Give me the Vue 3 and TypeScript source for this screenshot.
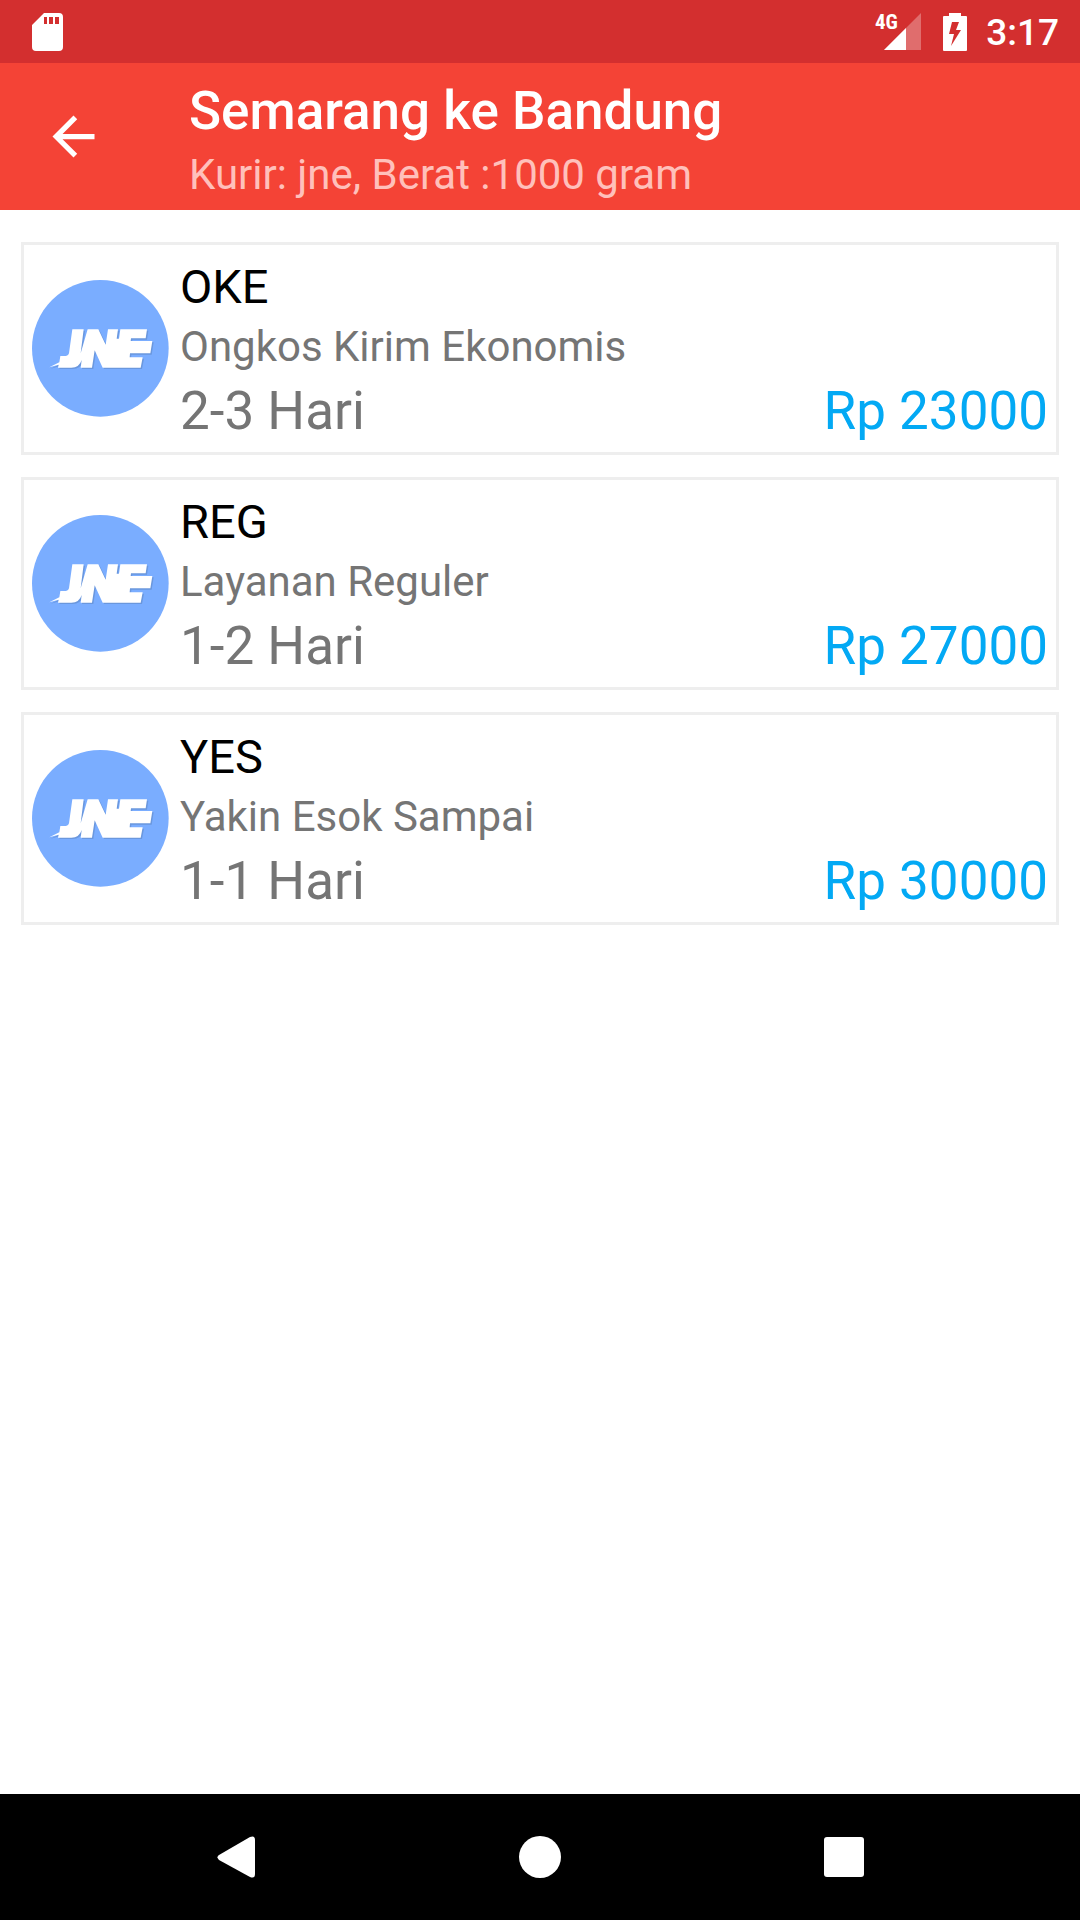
<script setup lang="ts">
interface Service {
  code: string
  description: string
  estimate: string
  price: string
}

const services: Service[] = [
  { code: 'OKE', description: 'Ongkos Kirim Ekonomis', estimate: '2-3 Hari', price: 'Rp 23000' },
  { code: 'REG', description: 'Layanan Reguler', estimate: '1-2 Hari', price: 'Rp 27000' },
  { code: 'YES', description: 'Yakin Esok Sampai', estimate: '1-1 Hari', price: 'Rp 30000' },
]

const logoShape =
  'M121 148H155L146 220L167 148H199L221 194L228 148H258L254 176H261L265 148H345L341 175H297L296 183H361' +
  'L355 220H294L293 232H332L326 263H212L188 211L180 263H146L149 240Q142 263 118 263H78L80 254L52 262' +
  'L82 247L85 228H102Q109 228 111 220Z'
</script>

<template>
  <div class="screen">
    <div class="status-bar">
      <svg class="sd-card" width="31" height="38" viewBox="0 0 31 38" aria-hidden="true">
        <path
          fill="#fff"
          fill-rule="evenodd"
          d="M12 0H27Q31 0 31 4V34Q31 38 27 38H4Q0 38 0 34V12ZM12 4V11H15V4ZM17 4V11H21V4ZM23 4V11H27V4Z"
        />
      </svg>
      <div class="indicators">
        <svg class="signal" width="50" height="42" viewBox="-4 -2 50 42" aria-hidden="true">
          <path fill="#fff" fill-opacity=".3" d="M46 0V37H9Z" />
          <path fill="#fff" d="M31 15V37H9Z" />
          <text class="network" x="0" y="16">4G</text>
        </svg>
        <svg class="battery" width="24" height="38" viewBox="0 0 24 38" aria-hidden="true">
          <path
            fill="#fff"
            fill-rule="evenodd"
            d="M6 0H18V3H23Q24 3 24 4V37Q24 38 23 38H1Q0 38 0 37V4Q0 3 1 3H6ZM9 9L6 21H11L8 33L18 17H13L16 9Z"
          />
        </svg>
        <span class="clock">3:17</span>
      </div>
    </div>

    <header class="toolbar">
      <button class="back" type="button" aria-label="Kembali">
        <svg width="63" height="63" viewBox="0 0 24 24" aria-hidden="true">
          <path fill="#fff" d="M20 11H7.83l5.59-5.59L12 4l-8 8 8 8 1.41-1.41L7.83 13H20v-2z" />
        </svg>
      </button>
      <div class="titles">
        <h1>Semarang ke Bandung</h1>
        <p>Kurir: jne, Berat :1000 gram</p>
      </div>
    </header>

    <main>
      <ul class="services">
        <li v-for="service in services" :key="service.code" class="card">
          <svg class="logo" viewBox="0 0 411 411" role="img" aria-label="JNE">
            <circle cx="205" cy="205" r="205" fill="#7aadff" />
            <path fill="#6a97dd" transform="translate(4 4)" :d="logoShape" />
            <path fill="#fff" :d="logoShape" />
          </svg>
          <div class="details">
            <h2>{{ service.code }}</h2>
            <p class="description">{{ service.description }}</p>
            <div class="summary">
              <span class="estimate">{{ service.estimate }}</span>
              <span class="price">{{ service.price }}</span>
            </div>
          </div>
        </li>
      </ul>
    </main>

    <nav class="nav-bar">
      <button type="button" aria-label="Back">
        <svg width="42" height="42" viewBox="0 0 42 42" aria-hidden="true">
          <path fill="#fff" d="M4 19L35 1Q40 -1 40 4V38Q40 43 35 41L4 24Q1 21 4 19Z" />
        </svg>
      </button>
      <button type="button" aria-label="Home">
        <svg width="42" height="42" viewBox="0 0 42 42" aria-hidden="true">
          <circle cx="21" cy="21" r="21" fill="#fff" />
        </svg>
      </button>
      <button type="button" aria-label="Recent apps">
        <svg width="42" height="42" viewBox="0 0 42 42" aria-hidden="true">
          <rect x="1" y="1" width="40" height="40" rx="3" fill="#fff" />
        </svg>
      </button>
    </nav>
  </div>
</template>

<style>
body {
  margin: 0;
  background: #fff;
}
</style>

<style scoped>
.screen {
  display: flex;
  flex-direction: column;
  min-height: 100vh;
  background: #fff;
  font-family: Roboto, "Noto Sans", sans-serif;
}

h1,
h2,
p,
ul {
  margin: 0;
  padding: 0;
}

svg {
  display: block;
}

button {
  display: flex;
  align-items: center;
  justify-content: center;
  padding: 0;
  border: 0;
  background: none;
  cursor: pointer;
}

.status-bar {
  display: flex;
  align-items: center;
  justify-content: space-between;
  height: 63px;
  padding: 0 21px 0 32px;
  background: #d32f2f;
  color: #fff;
}

.indicators {
  display: flex;
  align-items: center;
}

.network {
  font-family: "Roboto Condensed", Roboto, sans-serif;
  font-size: 21px;
  font-weight: 700;
  fill: #fff;
}

.battery {
  margin: 0 19px 0 22px;
}

.clock {
  padding-top: 2px;
  font-size: 37px;
  font-weight: 500;
  line-height: 61px;
}

.toolbar {
  display: flex;
  align-items: center;
  min-height: 147px;
  background: #f44336;
}

.back {
  width: 147px;
  height: 147px;
}

.titles {
  padding: 13px 42px 6px;
}

h1 {
  color: #fff;
  font-size: 53px;
  font-weight: 500;
  line-height: 70px;
}

.titles p {
  color: #ffc0bb;
  font-size: 42px;
  line-height: 58px;
}

main {
  flex: 1;
  padding: 32px 21px;
}

.services {
  display: flex;
  flex-direction: column;
  gap: 22px;
  list-style: none;
}

.card {
  display: flex;
  align-items: center;
  gap: 11px;
  padding: 10px 8px;
  border: 3px solid #eee;
}

.logo {
  flex: none;
  width: 137px;
  height: 137px;
}

.details {
  flex: 1;
}

h2 {
  color: #000;
  font-size: 47px;
  font-weight: 400;
  line-height: 64px;
}

.description {
  color: #757575;
  font-size: 42px;
  line-height: 56px;
}

.summary {
  display: flex;
  justify-content: space-between;
  margin-top: 5px;
  font-size: 53px;
  line-height: 62px;
}

.estimate {
  color: #757575;
}

.price {
  color: #03a9f4;
}

.nav-bar {
  display: flex;
  justify-content: center;
  gap: 94px;
  height: 126px;
  background: #000;
}

.nav-bar button {
  width: 210px;
}
</style>
